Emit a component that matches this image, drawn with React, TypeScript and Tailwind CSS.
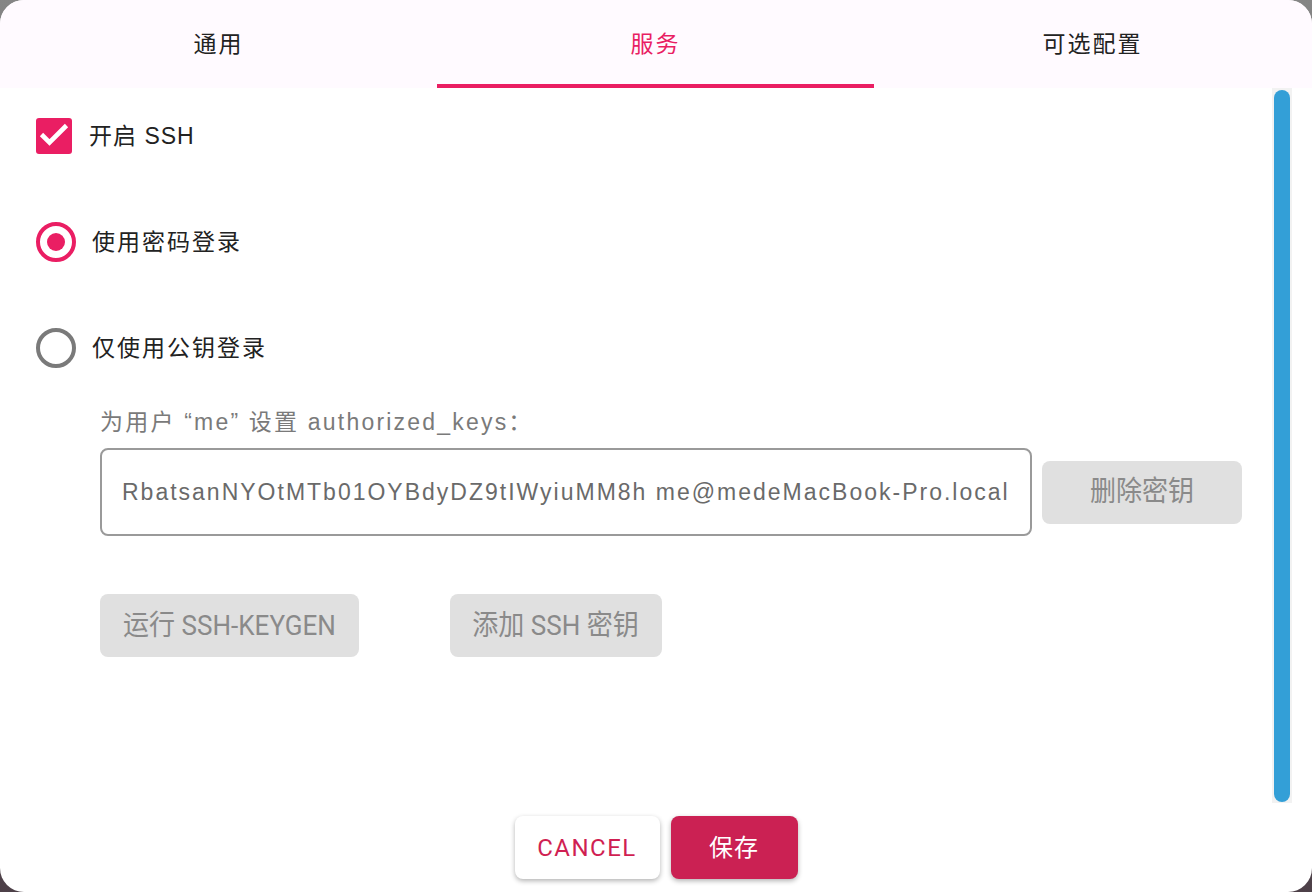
import React from "react";

const font = { fontFamily: "'Liberation Sans', 'Noto Sans CJK SC', sans-serif" };
const roboto = { fontFamily: "Roboto, 'Noto Sans CJK SC', sans-serif" };

function Tab({ label, active }: { label: string; active?: boolean }) {
    return (
        <div className="flex-1 relative flex items-center justify-center">
            <span className={`text-[23px] tracking-[2px] ${active ? "text-[#e91e63]" : "text-[#222]"}`}>{label}</span>
            {active && <div className="absolute left-0 right-0 bottom-0 h-[4px] bg-[#ea1e63]" />}
        </div>
    );
}

function Radio({ checked, label }: { checked?: boolean; label: string }) {
    return (
        <div className="flex items-center h-[40px]">
            <div
                className={`w-[40px] h-[40px] rounded-full border-[4px] flex items-center justify-center ${
                    checked ? "border-[#ea1e63]" : "border-[#7a7a7a]"
                }`}
            >
                {checked && <div className="w-[18px] h-[18px] rounded-full bg-[#ea1e63]" />}
            </div>
            <span className="ml-[16px] text-[23px] tracking-[2px] text-[#222]">{label}</span>
        </div>
    );
}

function GrayButton({ children, className }: { children: React.ReactNode; className?: string }) {
    return (
        <div
            className={`h-[63px] rounded-[8px] bg-[#e0e0e0] text-[#8a8a8a] flex items-center justify-center ${className ?? ""}`}
            style={roboto}
        >
            <span className="inline-block text-[28px] scale-x-[0.93] whitespace-nowrap">{children}</span>
        </div>
    );
}

export default function App() {
    return (
        <div className="w-[1312px] h-[892px] bg-gradient-to-b from-[#858585] to-[#4d4048]" style={font}>
            <div className="w-full h-full rounded-[24px] bg-white overflow-hidden flex flex-col">

                {/* tabs */}
                <div className="h-[88px] bg-[#fffaff] flex pr-[1px]">
                    <Tab label="通用" />
                    <Tab label="服务" active />
                    <Tab label="可选配置" />
                </div>

                <div className="flex h-[715px]">
                    <div className="flex-1 pl-[36px] pt-[30px]">
                        <div className="flex items-center h-[36px]">
                            <div className="w-[36px] h-[36px] rounded-[3px] bg-[#ea1e63]">
                                <svg width="36" height="36" viewBox="0 0 36 36" fill="none">
                                    <path d="M5.5 16.5l8 8L30.5 7.5" stroke="white" strokeWidth="4.6" />
                                </svg>
                            </div>
                            <span className="ml-[17px] text-[23px] tracking-[1px] text-[#222]">开启 SSH</span>
                        </div>

                        <div className="mt-[68px]">
                            <Radio checked label="使用密码登录" />
                        </div>
                        <div className="mt-[66px]">
                            <Radio label="仅使用公钥登录" />
                        </div>

                        <div className="ml-[64px] mt-[40px]">
                            <div className="text-[23px] tracking-[2.2px] text-[#7a7a7a] leading-[28px]">
                                为用户 “me” 设置 authorized_keys：
                            </div>
                            <div className="flex items-center mt-[12px]">
                                <div className="w-[932px] h-[88px] border-[2px] border-[#9a9a9a] rounded-[8px] flex items-center pl-[20px] text-[23px] tracking-[2px] text-[#6a6a6a] overflow-hidden whitespace-nowrap">
                                    RbatsanNYOtMTb01OYBdyDZ9tIWyiuMM8h me@medeMacBook-Pro.local
                                </div>
                                <GrayButton className="ml-[10px] w-[200px]">删除密钥</GrayButton>
                            </div>
                            <div className="flex mt-[58px] gap-[91px]">
                                <GrayButton className="w-[259px]">运行 SSH-KEYGEN</GrayButton>
                                <GrayButton className="w-[212px]">添加 SSH 密钥</GrayButton>
                            </div>
                        </div>
                    </div>

                    {/* scrollbar */}
                    <div className="w-[20px] mr-[20px] bg-[#f2f2f2] flex justify-center pt-[2px] pb-[1px]">
                        <div className="w-[16px] h-full rounded-full bg-[#339fd7]" />
                    </div>
                </div>

                {/* footer */}
                <div className="flex-1 flex justify-center pt-[13px] gap-[11px]" style={roboto}>
                    <div className="w-[145px] h-[63px] rounded-[8px] bg-white shadow-[0_2px_5px_rgba(0,0,0,0.3)] flex items-center justify-center text-[24px] tracking-[1.5px] text-[#d01f52]">
                        CANCEL
                    </div>
                    <div className="w-[127px] h-[63px] rounded-[8px] bg-[#cb2153] shadow-[0_2px_5px_rgba(0,0,0,0.3)] flex items-center justify-center text-[24px] tracking-[1px] text-white">
                        保存
                    </div>
                </div>
            </div>
        </div>
    );
}
